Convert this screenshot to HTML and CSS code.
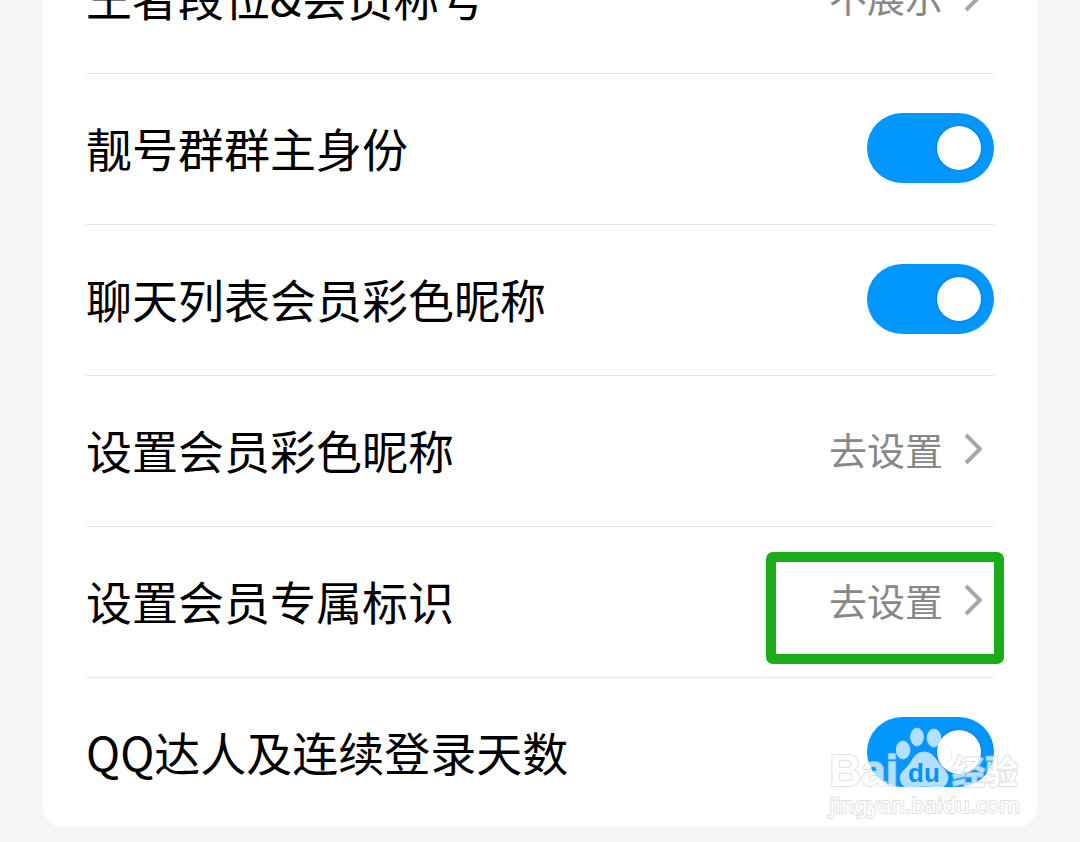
FILE: index.html
```html
<!DOCTYPE html>
<html lang="zh-CN">
<head>
<meta charset="utf-8">
<meta name="viewport" content="width=device-width, initial-scale=1">
<title>会员设置</title>
<link rel="stylesheet" href="styles.css">
</head>
<body>
<main class="page">
  <section class="card">
    <div class="row">
      <span class="title" id="t-rank">王者段位&amp;会员称号</span>
      <button class="action" type="button" aria-describedby="t-rank">不展示
        <svg class="chevron" viewBox="0 0 18 32" aria-hidden="true"><path d="M2 2l14 14L2 30"/></svg>
      </button>
    </div>
    <div class="row">
      <label class="title" for="s-owner">靓号群群主身份</label>
      <input class="switch" type="checkbox" id="s-owner" checked>
    </div>
    <div class="row">
      <label class="title" for="s-color">聊天列表会员彩色昵称</label>
      <input class="switch" type="checkbox" id="s-color" checked>
    </div>
    <div class="row">
      <span class="title" id="t-name">设置会员彩色昵称</span>
      <button class="action" type="button" aria-describedby="t-name">去设置
        <svg class="chevron" viewBox="0 0 18 32" aria-hidden="true"><path d="M2 2l14 14L2 30"/></svg>
      </button>
    </div>
    <div class="row row-marked">
      <span class="title" id="t-badge">设置会员专属标识</span>
      <button class="action" type="button" aria-describedby="t-badge">去设置
        <svg class="chevron" viewBox="0 0 18 32" aria-hidden="true"><path d="M2 2l14 14L2 30"/></svg>
      </button>
    </div>
    <div class="row row-last">
      <label class="title" for="s-days">QQ达人及连续登录天数</label>
      <input class="switch" type="checkbox" id="s-days" checked>
    </div>
    <div class="watermark">
      <div class="brand">
        <span class="brand-latin">Bai</span>
        <svg class="paw" viewBox="0 0 56 62" aria-label="du">
          <g class="paw-shape">
            <ellipse cx="7" cy="23" rx="7" ry="9"/>
            <ellipse cx="21" cy="10" rx="6.5" ry="9"/>
            <ellipse cx="38" cy="11" rx="7" ry="9"/>
            <ellipse cx="49" cy="27" rx="6.5" ry="9"/>
            <path d="M28 25c9 0 12 8 17 14 5 5 9 10 6 16-3 7-10 7-15 5-5-1-11-1-16 0-6 2-13 1-15-5-3-7 2-11 7-16 5-6 7-14 16-14z"/>
          </g>
          <text class="paw-text" x="28" y="55" text-anchor="middle">du</text>
        </svg>
        <span class="brand-cjk">经验</span>
      </div>
      <div class="site">jingyan.baidu.com</div>
    </div>
  </section>
</main>
</body>
</html>
```
FILE: styles.css
```css
* {
  box-sizing: border-box;
}

body {
  margin: 0;
  background: #f5f5f5;
  color: #000;
  font-family: "Noto Sans CJK SC", sans-serif;
}

.page {
  overflow: hidden;
  padding: 0 43px 15px;
}

/* The list is scrolled, so its first row starts above the viewport. */
.card {
  position: relative;
  margin-top: -77px;
  padding: 0 43px;
  border-radius: 20px;
  background: #fff;
}

.row {
  position: relative;
  display: flex;
  align-items: center;
  justify-content: space-between;
  min-height: 151px;
  border-bottom: 1px solid #e5e5e5;
}

.row-last {
  min-height: 149px;
  border-bottom: 0;
}

.title {
  padding-bottom: 4px;
  font-size: 46px;
  line-height: 68px;
}

.action {
  display: flex;
  align-items: center;
  gap: 21px;
  margin: 0 0 4px;
  padding: 0 12px 0 0;
  border: 0;
  background: none;
  color: #888;
  font-family: inherit;
  font-size: 38px;
  line-height: 56px;
}

.chevron {
  width: 18px;
  height: 32px;
  fill: none;
  stroke: #a8a8a8;
  stroke-width: 4;
}

.switch {
  appearance: none;
  display: flex;
  align-items: center;
  justify-content: flex-end;
  width: 127px;
  height: 70px;
  margin: 0 0 2px;
  padding: 0 13px;
  border-radius: 35px;
  background: #0297ff;
}

.switch::before {
  content: "";
  width: 44px;
  height: 44px;
  border-radius: 50%;
  background: #fff;
  box-shadow: 0 0 3px rgba(0, 60, 120, 0.5);
}

.switch:not(:checked) {
  justify-content: flex-start;
  background: #ccc;
}

.row-marked::after {
  content: "";
  position: absolute;
  top: 25px;
  right: -10px;
  box-sizing: border-box;
  width: 238px;
  height: 112px;
  border: 10px solid #1bac19;
  border-radius: 7px;
  pointer-events: none;
}

.watermark {
  position: absolute;
  right: 17px;
  bottom: 8px;
  color: #fff;
  white-space: nowrap;
  opacity: 0.7;
  pointer-events: none;
  paint-order: stroke;
  -webkit-text-stroke: 2px #d4d4d4;
}

.brand {
  display: flex;
  align-items: flex-end;
  height: 62px;
}

.brand-latin {
  font: bold 44px/36px "Liberation Sans", sans-serif;
}

.paw {
  flex: none;
  width: 56px;
  height: 62px;
  margin-left: -2px;
}

.paw-shape {
  fill: #fff;
  stroke: #d4d4d4;
  stroke-width: 1;
}

.paw-text {
  fill: #0090fa;
  font: bold 26px "Liberation Sans", sans-serif;
  -webkit-text-stroke: 0;
}

.brand-cjk {
  font-size: 33px;
  font-weight: 700;
  line-height: 38px;
}

.site {
  font: 22px/30px "Noto Sans", sans-serif;
}
```
